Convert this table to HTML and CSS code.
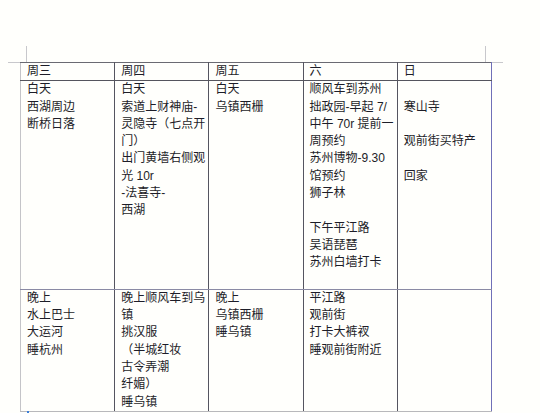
FILE: index.html
```html
<!DOCTYPE html>
<html lang="zh">
<head>
<meta charset="utf-8">
<link rel="stylesheet" href="styles.css">
</head>
<body>
<div class="page">
  <span class="mark mark-tl-v"></span>
  <span class="mark mark-tl-h"></span>
  <span class="mark mark-tr-v"></span>
  <span class="mark mark-tr-h"></span>
  <table class="plan">
    <colgroup>
      <col class="c"><col class="c"><col class="c"><col class="c"><col class="c">
    </colgroup>
    <tr class="head">
      <td class="b1">周三</td>
      <td class="b2">周四</td>
      <td class="b3">周五</td>
      <td class="b4">六</td>
      <td class="b5">日</td>
    </tr>
    <tr class="day">
      <td class="b1"><div>白天</div><div>西湖周边</div><div>断桥日落</div></td>
      <td class="b2"><div>白天</div><div>索道上财神庙-</div><div>灵隐寺（七点开</div><div>门）</div><div>出门黄墙右侧观</div><div>光 10r</div><div>-法喜寺-</div><div>西湖</div></td>
      <td class="b3"><div>白天</div><div>乌镇西栅</div></td>
      <td class="b4"><div>顺风车到苏州</div><div>拙政园-早起 7/</div><div>中午 70r 提前一</div><div>周预约</div><div>苏州博物-9.30</div><div>馆预约</div><div>狮子林</div><div class="blank"></div><div>下午平江路</div><div>吴语琵琶</div><div>苏州白墙打卡</div><div class="blank"></div></td>
      <td class="b5"><div class="blank"></div><div>寒山寺</div><div class="blank"></div><div>观前街买特产</div><div class="blank"></div><div>回家</div></td>
    </tr>
    <tr class="night">
      <td class="b1"><div>晚上</div><div>水上巴士</div><div>大运河</div><div>睡杭州</div></td>
      <td class="b2"><div>晚上顺风车到乌</div><div>镇</div><div>挑汉服</div><div>（半城红妆</div><div>古令弄潮</div><div>纤媚）</div><div>睡乌镇</div></td>
      <td class="b3"><div>晚上</div><div>乌镇西栅</div><div>睡乌镇</div></td>
      <td class="b4"><div>平江路</div><div>观前街</div><div>打卡大裤衩</div><div>睡观前街附近</div></td>
      <td class="b5"></td>
    </tr>
  </table>
  <span class="cursor"></span>
</div>
</body>
</html>
```
FILE: styles.css
```css
html, body {
  margin: 0;
  padding: 0;
  background: #fffffc;
}
body {
  width: 540px;
  height: 413px;
  overflow: hidden;
  font-family: "Liberation Sans", "Noto Sans CJK SC", sans-serif;
  font-size: 12px;
  color: #1d1d28;
}
.page {
  position: relative;
  padding: 62px 0 0 20px;
}
.plan {
  border-collapse: collapse;
  table-layout: fixed;
  width: 472px;
}
.plan .c {
  width: 94px;
}
.plan td {
  vertical-align: top;
  padding: 0 2px 0 6px;
  line-height: 17.3px;
  white-space: nowrap;
  border: 1px solid #555560;
}
.plan .blank {
  height: 17.3px;
}
.plan td.b1 { border-left-color: #c4c4c8; }
.plan td.b2 { border-left-color: #2a2a34; }
.plan td.b3 { border-left-color: #33333d; }
.plan td.b4 { border-left-color: #50507a; }
.plan td.b5 { border-left-color: #7474c4; border-right-color: #7070b8; }
.plan tr.head td { border-top-color: #6a6a72; border-bottom-color: #55555e; }
.plan tr.day td { border-bottom-color: #8a8aa4; }
.plan tr.night td { border-bottom-color: #b8b8bc; }

.mark {
  position: absolute;
  background: #c8c8cc;
}
.mark-tl-v { left: 26px; top: 46px; width: 1px; height: 16px; }
.mark-tl-h { left: 8px; top: 62px; width: 12px; height: 1px; }
.mark-tr-v { left: 485px; top: 46px; width: 1px; height: 16px; }
.mark-tr-h { left: 492px; top: 62px; width: 11px; height: 1px; }
.cursor {
  position: absolute;
  left: 27px;
  top: 411px;
  width: 2px;
  height: 2px;
  background: #3b7fd9;
}
```
